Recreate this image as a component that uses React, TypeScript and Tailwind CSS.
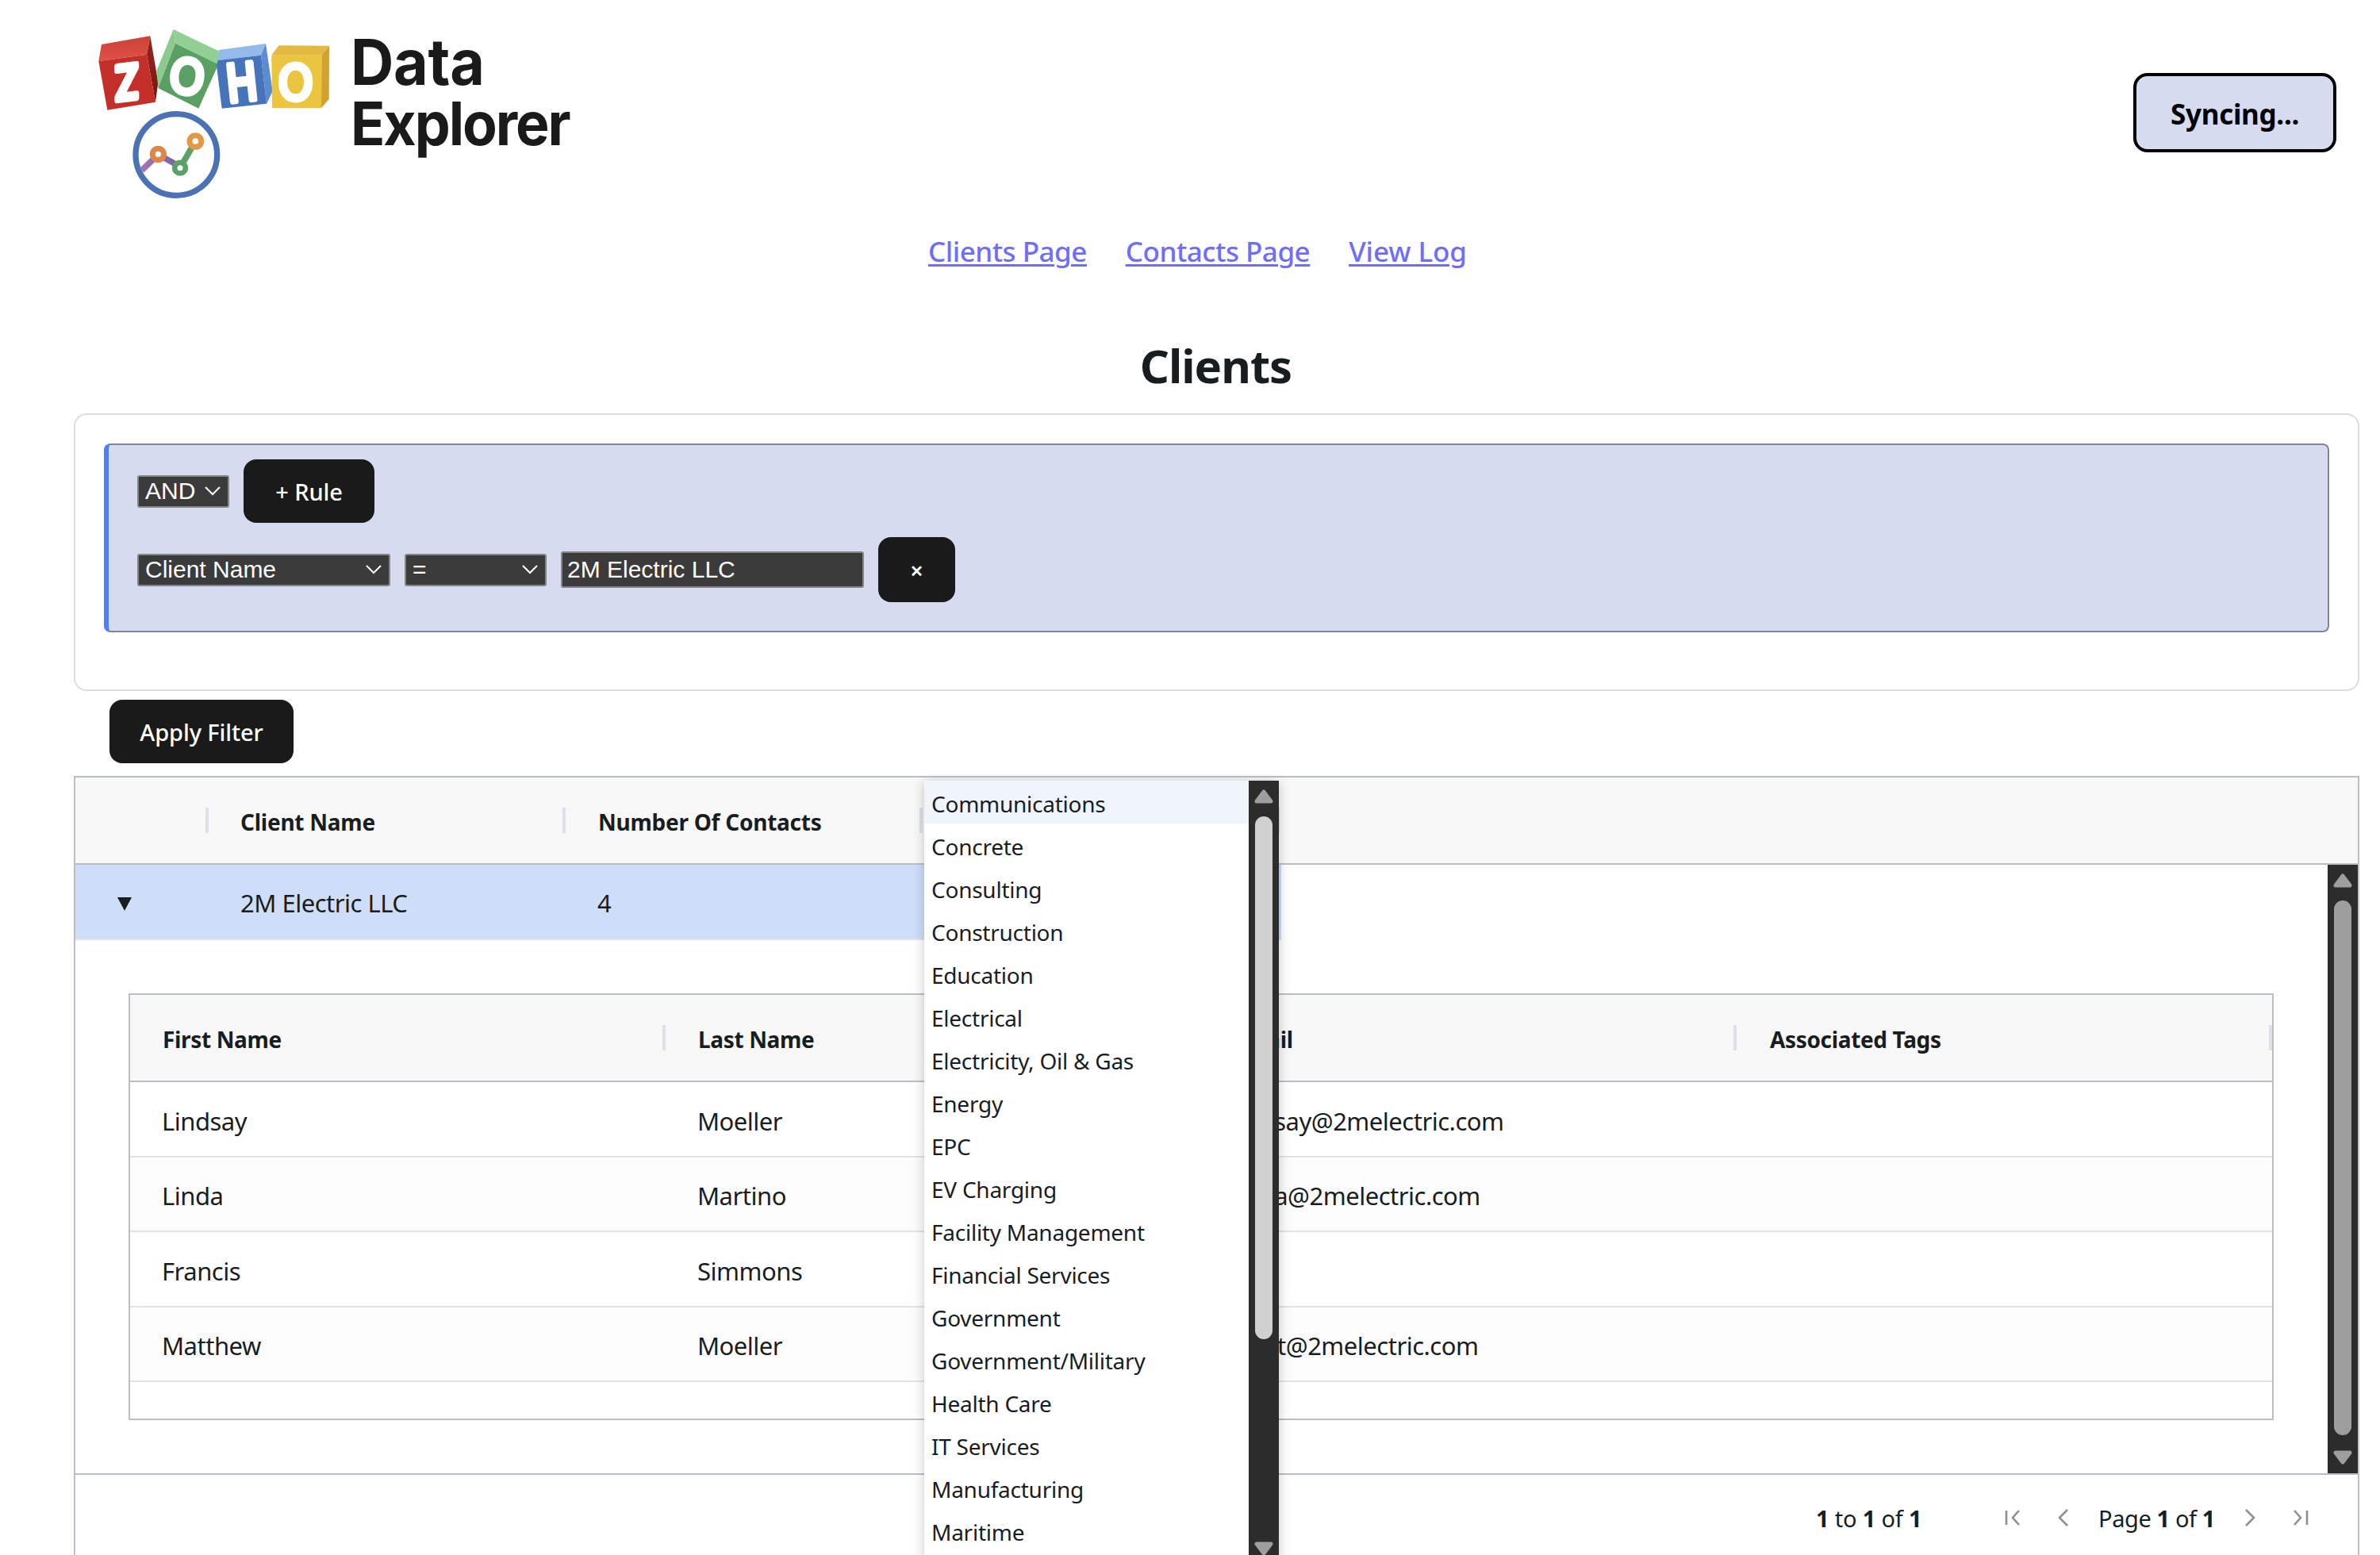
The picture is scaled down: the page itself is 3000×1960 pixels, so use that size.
import type { ReactNode } from "react";

const industries = [
  "Communications", "Concrete", "Consulting", "Construction", "Education", "Electrical",
  "Electricity, Oil & Gas", "Energy", "EPC", "EV Charging", "Facility Management",
  "Financial Services", "Government", "Government/Military", "Health Care", "IT Services",
  "Manufacturing", "Maritime",
];

const contacts = [
  ["Lindsay", "Moeller", "lindsay@2melectric.com"],
  ["Linda", "Martino", "linda@2melectric.com"],
  ["Francis", "Simmons", ""],
  ["Matthew", "Moeller", "matt@2melectric.com"],
];

function Letter({ ch, x, y, size, stroke, transform }: { ch: string; x: number; y: number; size: number; stroke: number; transform: string }) {
  return (
    <g transform={`translate(${x} ${y}) ${transform}`}>
      <text
        x={0}
        y={size * 0.364}
        textAnchor="middle"
        fontSize={size}
        strokeWidth={stroke}
        strokeLinejoin="round"
        className="fill-white stroke-white font-['Inter'] font-medium"
      >
        {ch}
      </text>
    </g>
  );
}

function Logo() {
  return (
    <svg viewBox="0 0 960 720" className="h-[240px] w-[320px] shrink-0">
      <defs>
        <linearGradient id="purple" x1="200" y1="590" x2="340" y2="540" gradientUnits="userSpaceOnUse">
          <stop offset="0" stopColor="#a874b4" />
          <stop offset="1" stopColor="#7466a6" />
        </linearGradient>
        <linearGradient id="redTop" x1="0" y1="0" x2="0" y2="1">
          <stop offset="0" stopColor="#cc4238" />
          <stop offset="1" stopColor="#df5045" />
        </linearGradient>
        <linearGradient id="redSide" x1="0" y1="0" x2="0" y2="1">
          <stop offset="0" stopColor="#96271f" />
          <stop offset="1" stopColor="#761610" />
        </linearGradient>
      </defs>
      <path d="M54 108 238 76 225 146 43 171Z" fill="url(#redTop)" />
      <path d="M238 76 268 252 258 326 225 146Z" fill="url(#redSide)" />
      <path d="M43 171 225 146 258 326 76 356Z" fill="#c43029" />
      <path d="M326 51 497 133 496 183 333 104Z" fill="#91cf93" />
      <path d="M326 51 333 104 268 273 262 208Z" fill="#8cca8f" />
      <path d="M333 104 496 183 421 350 268 273Z" fill="#5aa064" />
      <path d="M497 129 675 105 657 149 494 168Z" fill="#94baea" />
      <path d="M675 105 701 285 678 332 657 149Z" fill="#5b8bd0" />
      <path d="M494 168 657 149 678 332 509 350 489 188Z" fill="#4673b9" />
      <path d="M724 112 915 113 886 149 697 149Z" fill="#e3b940" />
      <path d="M915 113 914 315 885 349 886 149Z" fill="#d2a12f" />
      <path d="M697 149 886 149 885 349 699 349Z" fill="#ebc540" />
      <Letter ch="Z" x={149} y={251} size={176} stroke={22} transform="rotate(-7) skewX(-7) scale(.82 1)" />
      <Letter ch="O" x={378} y={228} size={186} stroke={15} transform="rotate(7) scale(.95 1)" />
      <Letter ch="H" x={584} y={250} size={194} stroke={20} transform="rotate(-6) scale(.78 1)" />
      <Letter ch="O" x={788} y={251} size={186} stroke={15} transform="scale(.95 1)" />
      <circle cx="337" cy="525" r="154" fill="#fff" stroke="#4b73b3" strokeWidth="22" />
      <path d="M206 584 268 524 351 570" fill="none" stroke="url(#purple)" strokeWidth="23" />
      <path d="M351 575 409 474" fill="none" stroke="#5ba268" strokeWidth="23" />
      <circle cx="268" cy="523" r="21.500" fill="#fff" stroke="#de874a" strokeWidth="21" />
      <circle cx="409" cy="474" r="22" fill="#fff" stroke="#e19945" strokeWidth="21" />
      <circle cx="351" cy="575" r="20.500" fill="#fff" stroke="#5ba268" strokeWidth="20" />
    </svg>
  );
}

function Chevron() {
  return (
    <svg viewBox="0 0 20 12" className="h-3 w-5 shrink-0" fill="none" stroke="#fff" strokeWidth="2">
      <path d="M1 1 10 10 19 1" />
    </svg>
  );
}

function Select({ label, className }: { label: string; className: string }) {
  return (
    <div className={`flex h-[41px] items-center justify-between rounded-[3px] border-2 border-[#858585] bg-[#3b3b3b] pr-[9px] pl-[8px] font-['Liberation_Sans',sans-serif] text-[30px] text-white ${className}`}>
      <span className="whitespace-nowrap leading-none">{label}</span>
      <Chevron />
    </div>
  );
}

function DarkButton({ children, className }: { children: ReactNode; className: string }) {
  return (
    <button className={`flex items-center justify-center rounded-2xl bg-[#1a1a1a] pt-0.5 text-[29px] font-medium tracking-[-0.1px] whitespace-nowrap text-white ${className}`}>
      {children}
    </button>
  );
}

function Arrow({ down, fill = "#9e9e9e" }: { down?: boolean; fill?: string }) {
  return (
    <svg viewBox="0 0 24 18" className={`h-[18px] w-6 shrink-0 ${down ? "rotate-180" : ""}`}>
      <path d="M12 3 21 15H3Z" fill={fill} stroke={fill} strokeWidth="5" strokeLinejoin="round" />
    </svg>
  );
}

function HeadCell({ label, className }: { label?: string; className: string }) {
  return (
    <div className={`flex h-full shrink-0 items-center justify-between ${className}`}>
      <span className="pt-[3px]">{label}</span>
      <span className="h-8 w-1 bg-[#dde0e9]" />
    </div>
  );
}

function PageIcon({ d, className }: { d: string; className: string }) {
  return (
    <svg viewBox="0 0 20 22" className={`h-[22px] w-5 shrink-0 ${className}`} fill="none" stroke="#8c9092" strokeWidth="2.6">
      <path d={d} />
    </svg>
  );
}

function IndustryMenu() {
  return (
    <div className="absolute top-[984px] left-[1165px] flex h-[1000px] w-[447px] bg-white shadow-[0_2px_14px_rgba(0,0,0,0.22)]">
      <ul className="flex-1 text-[28px] leading-[54px] tracking-[-0.25px]">
        {industries.map((name, i) => (
          <li key={name} className={`h-[54px] pt-0.5 pl-[9px] whitespace-nowrap ${i === 0 ? "bg-[#f0f4fd]" : ""}`}>
            {name}
          </li>
        ))}
      </ul>
      <div className="flex w-[38px] flex-col items-center bg-[#2c2c2c] pt-[11px]">
        <Arrow />
        <div className="mt-4 h-[659px] w-[22px] rounded-full bg-[#d0d0d0]" />
        <div className="mt-[255px]">
          <Arrow down />
        </div>
      </div>
    </div>
  );
}

export default function App() {
  return (
    <div className="relative flex h-[1960px] w-[3000px] flex-col overflow-hidden bg-white font-['Noto_Sans',sans-serif] text-[#181d1f]">
      <header className="flex h-[291px] shrink-0 items-start pl-[110px]">
        <div className="pt-5">
          <Logo />
        </div>
        <div className="ml-3 origin-left scale-x-[.94] pt-[38px] font-['Inter',sans-serif] font-[650] text-[#1a1a1a]">
          <div className="h-[78px] text-[80px] leading-[79px] tracking-[-0.2px]">Data</div>
          <div className="h-[78px] text-[76px] leading-[78px] tracking-[-2.2px]">Explorer</div>
        </div>
        <button className="mt-[92px] mr-[55px] ml-auto flex h-[100px] w-64 items-center justify-center rounded-[18px] border-4 border-black bg-[#d7dbef] pt-[5px] text-[35px] font-bold tracking-[-0.3px] text-black">
          Syncing...
        </button>
      </header>

      <nav className="flex h-[50px] shrink-0 gap-[49px] pl-[1170px] text-[35px] leading-[52px] font-medium tracking-[-0.5px] text-[#6e6ef8] underline decoration-[3px] underline-offset-[3px]">
        <a>Clients Page</a>
        <a>Contacts Page</a>
        <a className="tracking-[-0.1px]">View Log</a>
      </nav>

      <h1 className="mt-20 ml-[93px] h-[100px] w-[2879px] shrink-0 text-center text-[58px] leading-[80px] font-bold tracking-[-1px]">Clients</h1>

      <section className="ml-[93px] h-[350px] w-[2881px] shrink-0 rounded-2xl border-2 border-[#dddddd] p-9">
        <div className="flex h-[238px] flex-col rounded-lg border-2 border-l-[6px] border-[#8082a3] border-l-[#4f7ef7] bg-[#d7dbef] pt-[18px] pl-9">
          <div className="flex h-20 items-center gap-[18px]">
            <Select label="AND" className="w-[116px]" />
            <DarkButton className="h-20 w-[165px]">+ Rule</DarkButton>
          </div>
          <div className="mt-[18px] flex h-[82px] items-center gap-[18px]">
            <Select label="Client Name" className="w-[319px]" />
            <Select label="=" className="w-[179px]" />
            <div className="flex h-[46px] w-[382px] items-center rounded-[3px] border-2 border-[#858585] bg-[#3b3b3b] pl-[6px] font-['Liberation_Sans',sans-serif] text-[30px] leading-none text-white">
              2M Electric LLC
            </div>
            <DarkButton className="h-[82px] w-[97px] font-semibold">×</DarkButton>
          </div>
        </div>
      </section>

      <DarkButton className="mt-[11px] ml-[138px] h-20 w-[232px] shrink-0">Apply Filter</DarkButton>

      <section className="mt-4 ml-[93px] flex h-[1000px] w-[2881px] shrink-0 flex-col border-2 border-[#babfc7]">
        <div className="flex h-[110px] shrink-0 items-center border-b-2 border-[#babfc7] bg-[#f8f8f8] text-[28px] font-bold tracking-[-0.25px]">
          <HeadCell className="w-[168px]" />
          <HeadCell label="Client Name" className="w-[450px] pl-10" />
          <HeadCell label="Number Of Contacts" className="w-[450px] pl-[41px]" />
          <HeadCell className="w-[450px] pl-10" />
        </div>

        <div className="flex h-[767px] shrink-0">
          <div className="flex w-[2839px] flex-col">
            <div className="flex h-[95px] w-[1520px] items-center border-b-2 border-[#dfe3ee] bg-[#cfdef8] pt-0.5 text-[31px] tracking-[-0.5px]">
              <svg viewBox="0 0 18 17" className="mt-1 ml-[53px] h-[17px] w-[18px] shrink-0">
                <path d="M0 0H18L9 17Z" fill="#181d1f" />
              </svg>
              <span className="ml-[137px] w-[450px] pt-0.5">2M Electric LLC</span>
              <span className="pt-0.5">4</span>
            </div>

            <div className="mt-[67px] ml-[67px] h-[538px] w-[2704px] border-2 border-[#babfc7]">
              <div className="flex h-[110px] items-center border-b-2 border-[#babfc7] bg-[#f8f8f8] text-[28px] font-bold tracking-[-0.35px]">
                <HeadCell label="First Name" className="w-[675px] pl-[41px]" />
                <HeadCell label="Last Name" className="w-[675px] pl-[41px]" />
                <HeadCell label="Email" className="w-[675px] pl-[41px]" />
                <HeadCell label="Associated Tags" className="w-[675px] pl-[42px]" />
              </div>
              {contacts.map((c, i) => (
                <div
                  key={c[0]}
                  className={`flex h-[94.5px] items-center border-b-2 border-[#e0e2ec] pt-[5px] text-[31px] tracking-[-0.5px] ${i % 2 ? "bg-[#fcfcfc]" : ""}`}
                >
                  {c.map((v, j) => (
                    <span key={j} className="w-[675px] shrink-0 pl-10">{v}</span>
                  ))}
                </div>
              ))}
            </div>
          </div>
          <div className="flex w-[38px] flex-col items-center bg-[#2c2c2c] pt-[11px]">
            <Arrow />
            <div className="mt-4 h-[674px] w-[22px] rounded-full bg-[#9e9e9e]" />
            <div className="mt-[19px]">
              <Arrow down />
            </div>
          </div>
        </div>

        <div className="flex h-[110px] shrink-0 items-center border-t-2 border-[#babfc7] pl-[2194px] text-[29px] tracking-[-0.2px] whitespace-nowrap">
          <span className="w-[238px] pt-px">
            <b>1</b> to <b>1</b> of <b>1</b>
          </span>
          <PageIcon d="M2 2V20M18 2 10 11 18 20" className="" />
          <PageIcon d="M14 1 4 11 14 21" className="ml-[45px]" />
          <span className="ml-[33px] w-[182px] pt-px tracking-[-0.4px]">
            Page <b>1</b> of <b>1</b>
          </span>
          <PageIcon d="M4 1 14 11 4 21" className="" />
          <PageIcon d="M18 2V20M2 2 10 11 2 20" className="ml-[43px]" />
        </div>
      </section>

      <IndustryMenu />
    </div>
  );
}
